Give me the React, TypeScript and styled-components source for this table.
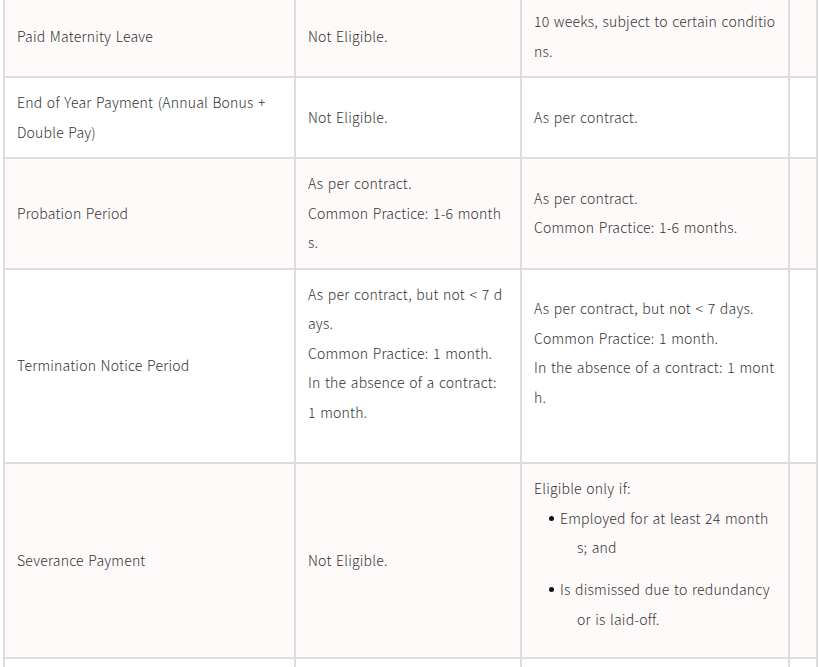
import React from "react";
import styled, { createGlobalStyle } from "styled-components";

const Global = createGlobalStyle`
  html, body { margin: 0; padding: 0; background: #ffffff; }
  body { font-family: "Noto Sans CJK KR", "Noto Sans", sans-serif; }
`;

const Page = styled.div`
  padding: 0 0 0 3px;
  margin-top: -5px;
  width: 816px;
`;

const Table = styled.table`
  width: 815px;
  border-collapse: collapse;
  table-layout: fixed;
  border: 2px solid #dddddd;
  font-size: 14px;
  font-weight: 300;
  line-height: 29.5px;
  letter-spacing: 0.2px;
  word-spacing: 1.2px;
  color: #333333;
  word-break: break-all;
`;

const Row = styled.tr<{ $tint: boolean }>`
  background: ${(p) => (p.$tint ? "#fffafa" : "#ffffff")};
`;

const Cell = styled.td<{ $tail?: boolean }>`
  border: 2px solid #dddddd;
  padding: 10px 11px ${(p) => (p.$tail ? "35px" : "10px")} 12px;
  vertical-align: middle;
  &:nth-child(-n + 2) {
    padding-right: 15px;
  }
`;

const Line = styled.div``;

const Bullets = styled.ul`
  margin: 0;
  padding: 0 0 0 15px;
  list-style: none;
`;

const Bullet = styled.li`
  padding-left: 28px;
  text-indent: -28px;
  margin-bottom: 12.5px;
  &::before {
    content: "";
    display: inline-block;
    width: 5px;
    height: 5px;
    border-radius: 50%;
    background: #111;
    vertical-align: middle;
    margin: 0 6px 3px 0;
    text-indent: 0;
  }
`;

type RowData = {
  label: string;
  a: React.ReactNode;
  b: React.ReactNode;
  tail?: boolean;
};

const rows: RowData[] = [
  {
    label: "Paid Maternity Leave",
    a: "Not Eligible.",
    b: "10 weeks, subject to certain conditions.",
  },
  {
    label: "End of Year Payment (Annual Bonus + Double Pay)",
    a: "Not Eligible.",
    b: "As per contract.",
  },
  {
    label: "Probation Period",
    a: (
      <>
        <Line>As per contract.</Line>
        <Line>Common Practice: 1-6 months.</Line>
      </>
    ),
    b: (
      <>
        <Line>As per contract.</Line>
        <Line>Common Practice: 1-6 months.</Line>
      </>
    ),
  },
  {
    label: "Termination Notice Period",
    a: (
      <>
        <Line>As per contract, but not &lt; 7 days.</Line>
        <Line>Common Practice: 1 month.</Line>
        <Line>In the absence of a contract: 1 month.</Line>
      </>
    ),
    b: (
      <>
        <Line>As per contract, but not &lt; 7 days.</Line>
        <Line>Common Practice: 1 month.</Line>
        <Line>In the absence of a contract: 1 month.</Line>
      </>
    ),
    tail: true,
  },
  {
    label: "Severance Payment",
    a: "Not Eligible.",
    b: (
      <>
        <Line>Eligible only if:</Line>
        <Bullets>
          <Bullet>Employed for at least 24 months; and</Bullet>
          <Bullet>Is dismissed due to redundancy or is laid-off.</Bullet>
        </Bullets>
      </>
    ),
  },
];

export default function App() {
  return (
    <>
      <Global />
      <Page>
        <Table>
          <colgroup>
            <col style={{ width: 291 }} />
            <col style={{ width: 226 }} />
            <col style={{ width: 268 }} />
            <col style={{ width: 28 }} />
          </colgroup>
          <tbody>
            {rows.map((r, i) => (
              <Row key={r.label} $tint={i % 2 === 0}>
                <Cell>{r.label}</Cell>
                <Cell $tail={r.tail}>{r.a}</Cell>
                <Cell $tail={r.tail}>{r.b}</Cell>
                <Cell />
              </Row>
            ))}
            <Row $tint={false}>
              <Cell>&nbsp;</Cell>
              <Cell>&nbsp;</Cell>
              <Cell>&nbsp;</Cell>
              <Cell />
            </Row>
          </tbody>
        </Table>
      </Page>
    </>
  );
}
